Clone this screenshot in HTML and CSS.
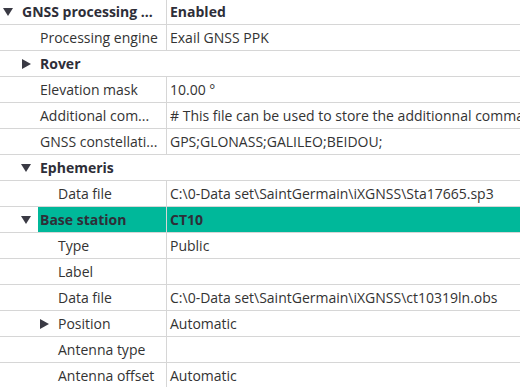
FILE: index.html
```html
<!DOCTYPE html>
<html lang="en">
  <head>
    <meta charset="UTF-8" />
    <meta name="viewport" content="width=device-width, initial-scale=1.0" />
    <title>GNSS processing</title>
    <link rel="stylesheet" href="styles.css">
  </head>
  <body>
    <div class="tree">
      <div class="row group">
        <div class="name lvl0"><span class="tog down"></span><span class="label">GNSS processing ...</span></div>
        <div class="value">Enabled</div>
      </div>
      <div class="row">
        <div class="name lvl1"><span class="tog"></span><span class="label">Processing engine</span></div>
        <div class="value">Exail GNSS PPK</div>
      </div>
      <div class="row group novalue">
        <div class="name lvl1"><span class="tog right"></span><span class="label">Rover</span></div>
      </div>
      <div class="row">
        <div class="name lvl1"><span class="tog"></span><span class="label">Elevation mask</span></div>
        <div class="value">10.00 °</div>
      </div>
      <div class="row">
        <div class="name lvl1"><span class="tog"></span><span class="label">Additional com...</span></div>
        <div class="value"># This file can be used to store the additionnal commands</div>
      </div>
      <div class="row">
        <div class="name lvl1"><span class="tog"></span><span class="label">GNSS constellati...</span></div>
        <div class="value">GPS;GLONASS;GALILEO;BEIDOU;</div>
      </div>
      <div class="row group novalue">
        <div class="name lvl1"><span class="tog down"></span><span class="label">Ephemeris</span></div>
      </div>
      <div class="row">
        <div class="name lvl2"><span class="tog"></span><span class="label">Data file</span></div>
        <div class="value">C:\0-Data set\SaintGermain\iXGNSS\Sta17665.sp3</div>
      </div>
      <div class="row group selected">
        <div class="name lvl1"><span class="tog down"></span><span class="label">Base station</span></div>
        <div class="value">CT10</div>
      </div>
      <div class="row">
        <div class="name lvl2"><span class="tog"></span><span class="label">Type</span></div>
        <div class="value">Public</div>
      </div>
      <div class="row">
        <div class="name lvl2"><span class="tog"></span><span class="label">Label</span></div>
        <div class="value"></div>
      </div>
      <div class="row">
        <div class="name lvl2"><span class="tog"></span><span class="label">Data file</span></div>
        <div class="value">C:\0-Data set\SaintGermain\iXGNSS\ct10319ln.obs</div>
      </div>
      <div class="row">
        <div class="name lvl2"><span class="tog right"></span><span class="label">Position</span></div>
        <div class="value">Automatic</div>
      </div>
      <div class="row">
        <div class="name lvl2"><span class="tog"></span><span class="label">Antenna type</span></div>
        <div class="value"></div>
      </div>
      <div class="row">
        <div class="name lvl2"><span class="tog"></span><span class="label">Antenna offset</span></div>
        <div class="value">Automatic</div>
      </div>
    </div>
  </body>
</html>
```

FILE: styles.css
```css
body {
  margin: 0;
  background: #fff;
  font-family: "Open Sans", "Noto Sans", sans-serif;
  font-size: 14px;
  color: #333;
  overflow: hidden;
}
.tree {
  margin-top: -1px;
}
.row {
  display: flex;
  height: 25px;
  border-bottom: 1px solid #d6d6d6;
  white-space: nowrap;
}
.name {
  width: 166px;
  flex: none;
  display: flex;
  border-right: 1px solid #d6d6d6;
}
.novalue .name {
  border-right: none;
}
.lvl0 {
  padding-left: 2px;
  width: 164px;
}
.lvl1 {
  padding-left: 20px;
  width: 146px;
}
.lvl2 {
  padding-left: 38px;
  width: 128px;
}
.tog {
  width: 18px;
  flex: none;
  display: flex;
  align-items: center;
}
.tog.down::before {
  content: "";
  margin-left: 1px;
  border-left: 5px solid transparent;
  border-right: 5px solid transparent;
  border-top: 8px solid #3a3a44;
}
.tog.right::before {
  content: "";
  margin-left: 2px;
  border-top: 5px solid transparent;
  border-bottom: 5px solid transparent;
  border-left: 9px solid #3a3a44;
}
.label {
  flex: 1;
  padding-left: 2px;
  line-height: 25px;
  overflow: hidden;
}
.value {
  flex: 1;
  padding-left: 3px;
  line-height: 25px;
  overflow: hidden;
}
.group .label,
.group .value {
  font-weight: bold;
  color: #2e2e38;
}
.selected .label,
.selected .value {
  background: #00b89a;
}
```
